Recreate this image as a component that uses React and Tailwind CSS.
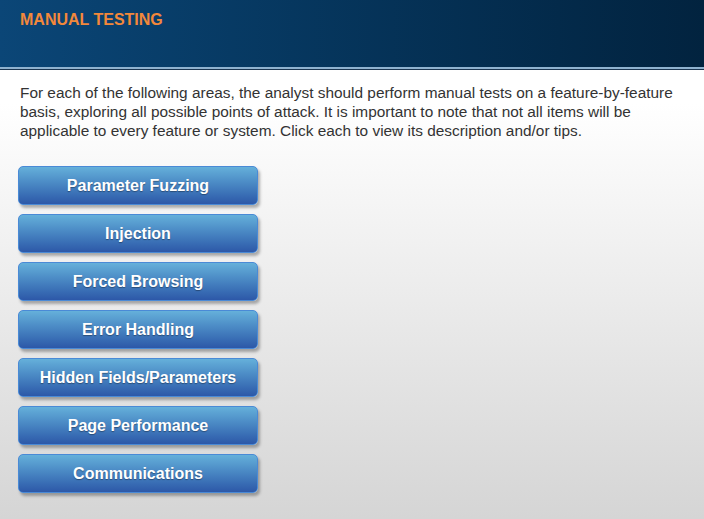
const topics = [
  "Parameter Fuzzing",
  "Injection",
  "Forced Browsing",
  "Error Handling",
  "Hidden Fields/Parameters",
  "Page Performance",
  "Communications",
];

export default function App() {
  return (
    <div className="w-[704px] h-[519px] overflow-hidden flex flex-col bg-gradient-to-b from-white from-20% to-[#d5d5d5] font-['Liberation_Sans',Arial,sans-serif]">
      {/* Header */}
      <header className="h-[67px] shrink-0 bg-gradient-to-r from-[#0b4677] to-[#02233f] px-5 pt-[11px]">
        <h1 className="text-[16px] font-bold text-[#f3883b] leading-[18px]">MANUAL TESTING</h1>
      </header>
      <div className="h-[2px] bg-[#8fb2cf]" />
      <div className="h-px bg-[#1b3550]" />

      {/* Intro */}
      <p className="px-5 pt-[13px] text-[15.4px] leading-[19px] text-[#333333]">
        For each of the following areas, the analyst should perform manual tests on a feature-by-feature
        basis, exploring all possible points of attack. It is important to note that not all items will be
        applicable to every feature or system. Click each to view its description and/or tips.
      </p>

      {/* Topic buttons */}
      <div className="flex flex-col gap-[9px] pl-[18px] pt-[26px]">
        {topics.map((t) => (
          <button
            key={t}
            className="w-[240px] h-[39px] rounded-[5px] border border-[#4a8ad6] bg-gradient-to-b from-[#65b0da] to-[#2d58a8] shadow-[2px_3px_3px_rgba(0,0,0,0.3)] text-white text-[16px] font-bold [text-shadow:0_1px_1px_rgba(0,0,0,0.35)]"
          >
            {t}
          </button>
        ))}
      </div>
    </div>
  );
}
